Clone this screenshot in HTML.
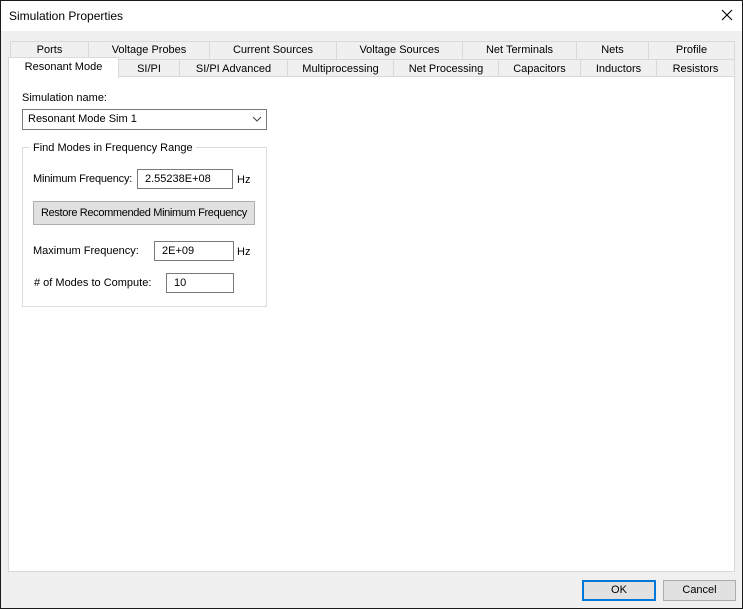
<!DOCTYPE html><html><head><style>
*{box-sizing:border-box;margin:0;padding:0}
body{width:743px;height:609px;position:relative;background:#f0f0f0;font-family:"Liberation Sans",sans-serif;font-size:11px;color:#000;overflow:hidden}
.a{position:absolute}
.win{left:0;top:0;width:743px;height:609px;border:1px solid #1a1a1a}
.title{left:1px;top:1px;width:741px;height:30px;background:#fff}
.tab{position:absolute;border:1px solid #d9d9d9;background:#f0f0f0;text-align:center;line-height:16px;font-size:11px;border-bottom:none}
.panel{left:8px;top:76px;width:727px;height:496px;background:#fff;border:1px solid #d9d9d9}
.in{position:absolute;border:1px solid #7a7a7a;background:#fff;padding-left:7px;line-height:18px}
.btn{position:absolute;background:#e1e1e1;border:1px solid #adadad;text-align:center}
</style></head><body>
<div class="a win"></div>
<div class="a title"></div>
<div class="a" style="left:9px;top:9px;font-size:12px">Simulation Properties</div>
<svg class="a" style="left:721px;top:9px" width="12" height="12"><path d="M1 1L11 11M11 1L1 11" stroke="#000" stroke-width="1.1"/></svg>

<div class="tab" style="left:10px;top:41px;width:79px;height:18px">Ports</div>
<div class="tab" style="left:88px;top:41px;width:122px;height:18px">Voltage Probes</div>
<div class="tab" style="left:209px;top:41px;width:128px;height:18px">Current Sources</div>
<div class="tab" style="left:336px;top:41px;width:127px;height:18px">Voltage Sources</div>
<div class="tab" style="left:462px;top:41px;width:115px;height:18px">Net Terminals</div>
<div class="tab" style="left:576px;top:41px;width:73px;height:18px">Nets</div>
<div class="tab" style="left:648px;top:41px;width:87px;height:18px">Profile</div>

<div class="tab" style="left:118px;top:59px;width:62px;height:18px;line-height:18px">SI/PI</div>
<div class="tab" style="left:179px;top:59px;width:109px;height:18px;line-height:18px">SI/PI Advanced</div>
<div class="tab" style="left:287px;top:59px;width:107px;height:18px;line-height:18px">Multiprocessing</div>
<div class="tab" style="left:393px;top:59px;width:106px;height:18px;line-height:18px">Net Processing</div>
<div class="tab" style="left:498px;top:59px;width:83px;height:18px;line-height:18px">Capacitors</div>
<div class="tab" style="left:580px;top:59px;width:77px;height:18px;line-height:18px">Inductors</div>
<div class="tab" style="left:656px;top:59px;width:79px;height:18px;line-height:18px">Resistors</div>
<div class="a panel"></div>
<div class="tab" style="left:8px;top:57px;width:111px;height:21px;background:#fff;line-height:18px;z-index:2">Resonant Mode</div>

<div class="a" style="left:22px;top:92px">Simulation name:</div>
<div class="in" style="left:22px;top:109px;width:245px;height:21px;padding-left:5px;line-height:19px">Resonant Mode Sim 1</div>
<svg class="a" style="left:252px;top:116px" width="10" height="6"><path d="M1 1L5 5L9 1" stroke="#444" fill="none"/></svg>

<div class="a" style="left:22px;top:147px;width:245px;height:160px;border:1px solid #dcdcdc"></div>
<div class="a" style="left:30px;top:142px;background:#fff;padding:0 3px">Find Modes in Frequency Range</div>
<div class="a" style="left:33px;top:173px;letter-spacing:-0.2px">Minimum Frequency:</div>
<div class="in" style="left:137px;top:169px;width:96px;height:20px">2.55238E+08</div>
<div class="a" style="left:237px;top:174px">Hz</div>
<div class="btn" style="left:33px;top:201px;width:222px;height:24px;line-height:22px;letter-spacing:-0.35px">Restore Recommended Minimum Frequency</div>
<div class="a" style="left:33px;top:245px">Maximum Frequency:</div>
<div class="in" style="left:154px;top:241px;width:80px;height:20px">2E+09</div>
<div class="a" style="left:237px;top:246px">Hz</div>
<div class="a" style="left:34px;top:277px"># of Modes to Compute:</div>
<div class="in" style="left:166px;top:273px;width:68px;height:20px">10</div>

<div class="btn" style="left:582px;top:580px;width:74px;height:21px;line-height:17px;border:2px solid #0078d7">OK</div>
<div class="btn" style="left:663px;top:580px;width:73px;height:21px;line-height:19px">Cancel</div>
</body></html>
